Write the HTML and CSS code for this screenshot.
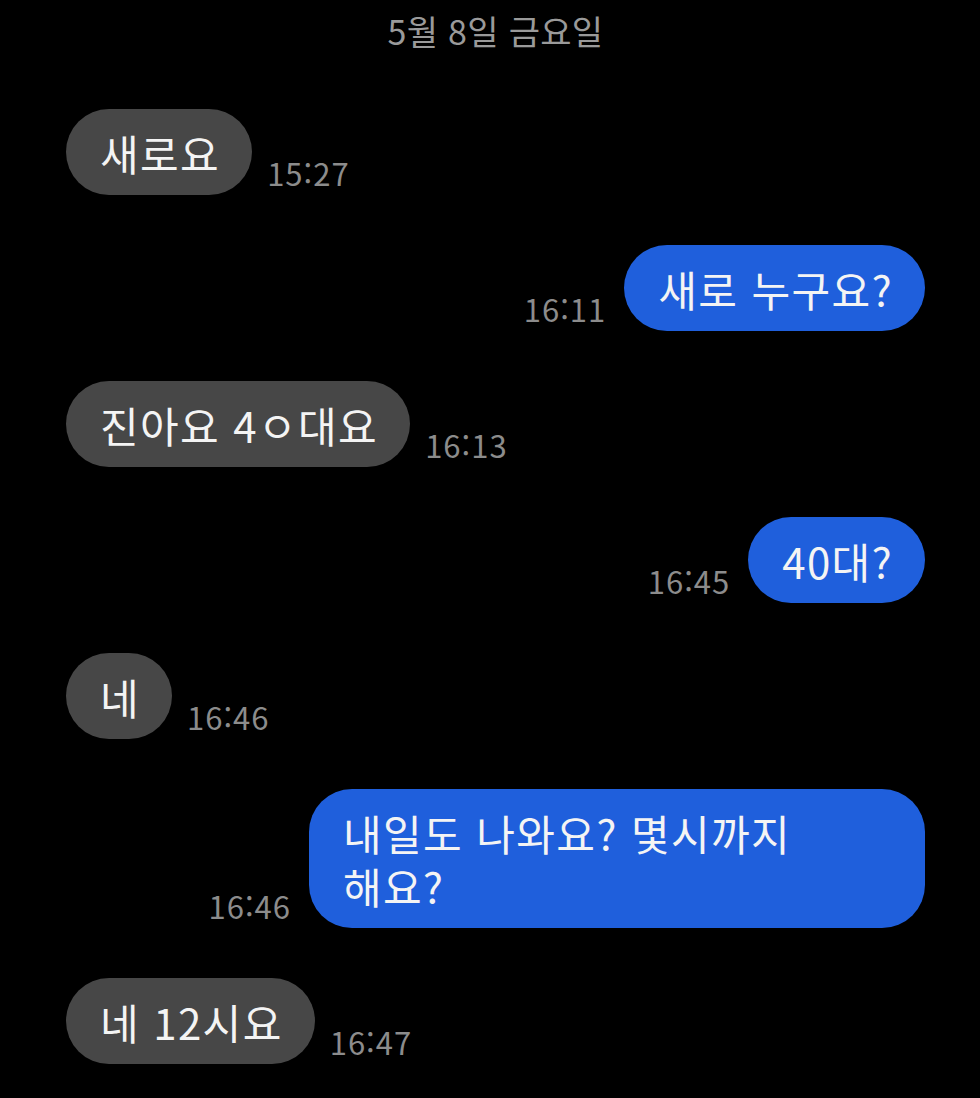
FILE: index.html
```html
<!DOCTYPE html>
<html lang="ko">
<head>
<meta charset="utf-8">
<link rel="stylesheet" href="styles.css">
</head>
<body>
<div class="chat">
  <div class="date">5월 8일 금요일</div>
  <div class="row in">
    <div class="bubble">새로요</div>
    <div class="time">15:27</div>
  </div>
  <div class="row out">
    <div class="time">16:11</div>
    <div class="bubble">새로 누구요?</div>
  </div>
  <div class="row in">
    <div class="bubble">진아요 4ㅇ대요</div>
    <div class="time">16:13</div>
  </div>
  <div class="row out">
    <div class="time">16:45</div>
    <div class="bubble">40대?</div>
  </div>
  <div class="row in">
    <div class="bubble">네</div>
    <div class="time">16:46</div>
  </div>
  <div class="row out">
    <div class="time">16:46</div>
    <div class="bubble">내일도 나와요? 몇시까지 해요?</div>
  </div>
  <div class="row in">
    <div class="bubble">네 12시요</div>
    <div class="time">16:47</div>
  </div>
</div>
</body>
</html>
```
FILE: styles.css
```css
html, body {
  margin: 0;
  padding: 0;
  background: #000;
}
body {
  font-family: "Noto Sans CJK KR", "Noto Sans", sans-serif;
  width: 980px;
  height: 1098px;
  overflow: hidden;
}
.chat {
  display: flex;
  flex-direction: column;
  gap: 50px;
  padding: 0 55px 0 66px;
}
.date {
  text-align: center;
  color: #9a9a9a;
  font-size: 34px;
  letter-spacing: 0.3px;
  line-height: 62px;
  margin-bottom: -3px;
}
.row {
  display: flex;
  align-items: flex-end;
}
.row.in {
  justify-content: flex-start;
  gap: 15px;
}
.row.out {
  justify-content: flex-end;
  gap: 18px;
}
.bubble {
  background: #474747;
  color: #f4f4f4;
  font-size: 42px;
  letter-spacing: 1.4px;
  line-height: 53px;
  padding: 16.5px 32px 16.5px 34px;
  border-radius: 43px;
  max-width: 550px;
  word-break: keep-all;
}
.out .bubble {
  background: #1f5fdc;
}
.time {
  color: #8c8c8c;
  font-size: 31px;
  letter-spacing: 1px;
  line-height: 36px;
  margin-bottom: 4px;
  white-space: nowrap;
}
```
